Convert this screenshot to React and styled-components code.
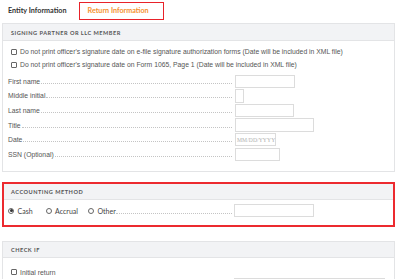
import React from "react";
import styled, { createGlobalStyle } from "styled-components";

const Global = createGlobalStyle`
  html, body { margin: 0; padding: 0; background: #fff; }
  body { font-family: "Liberation Sans", Arial, sans-serif; color: #555; }
  * { box-sizing: border-box; }
`;

const Page = styled.div`
  width: 399px;
  height: 279px;
  overflow: hidden;
  background: #fff;
`;

const Tabs = styled.div`
  display: flex;
  align-items: center;
  height: 23px;
  padding: 1px 0 3px 0;
`;

const Tab = styled.div`
  font-family: Lato, "Liberation Sans", sans-serif;
  font-weight: 700;
  font-size: 7.2px;
  height: 18px;
  display: flex;
  align-items: center;
  color: ${(p) => (p.$active ? "#f5922f" : "#333")};
  border: 1.5px solid ${(p) => (p.$active ? "#e8222a" : "transparent")};
  padding: 0 ${(p) => (p.$active ? "14px 0 8px" : "0 0 7px")};
  margin-left: ${(p) => (p.$active ? "11px" : "0")};
`;

const Content = styled.div`
  padding: 0 4px 0 2px;
  display: flex;
  flex-direction: column;
`;

const Panel = styled.section`
  border: ${(p) => (p.$highlight ? "2px solid #ec2a2f" : "1px solid #e3e4e6")};
  margin-top: ${(p) => p.$mt || 0}px;
  background: #fff;
`;

const PanelHeader = styled.div`
  height: ${(p) => p.$h || 17}px;
  background: #f2f3f5;
  border-bottom: 1px solid #e3e4e6;
  display: flex;
  align-items: center;
  padding-left: ${(p) => p.$pl || 8}px;
  font-family: Lato, "Liberation Sans", sans-serif;
  font-weight: 700;
  font-size: 5.6px;
  letter-spacing: 0.5px;
  color: #555;
  text-transform: uppercase;
`;

const PanelBody = styled.div`
  padding: ${(p) => p.$pad || "4px 0 9px 0"};
`;

const CheckRow = styled.label`
  display: flex;
  align-items: center;
  height: 13px;
  padding-left: ${(p) => p.$pl || 8}px;
  font-size: 6.8px;
  color: #555;
  gap: 3px;
`;

const Box = styled.span`
  width: 6px;
  height: 6px;
  border: 1px solid #666;
  border-radius: 1px;
  background: #fff;
  flex: none;
`;

const Fields = styled.div`
  display: grid;
  grid-template-columns: 232px auto;
  margin-top: 3px;
`;

const FieldLabel = styled.div`
  height: 14.6px;
  display: flex;
  align-items: center;
  padding-left: 5px;
  font-size: 6.8px;
  color: #555;
  white-space: nowrap;
  gap: 1px;
  &::after {
    content: "";
    flex: 1;
    border-bottom: 1px dotted #c4c4c4;
    margin-top: 4px;
    margin-right: 3px;
  }
`;

const InputCell = styled.div`
  height: 14.6px;
  display: flex;
  align-items: center;
`;

const Input = styled.div`
  width: ${(p) => p.$w}px;
  height: 13.5px;
  border: 1px solid #dcdcdc;
  background: #fff;
  display: flex;
  align-items: center;
  padding-left: 1px;
  font-family: "Liberation Serif", serif;
  font-size: 5.6px;
  color: #b0b0b0;
  letter-spacing: 0.1px;
  flex: none;
`;

const IndentRow = styled.div`
  display: flex;
  padding-left: 231px;
  margin-top: -1px;
`;

const RadioRow = styled.div`
  display: flex;
  align-items: center;
  height: 22px;
  padding: 0 0 0 4px;
  font-family: Lato, "Liberation Sans", sans-serif;
  font-size: 7px;
  color: #444;
`;

const RadioGroup = styled.div`
  display: flex;
  align-items: center;
  width: 226px;
`;

const RadioItem = styled.label`
  display: flex;
  align-items: center;
  gap: 3.5px;
  margin-right: ${(p) => p.$mr || 0}px;
  white-space: nowrap;
`;

const Circle = styled.span`
  width: 6px;
  height: 6px;
  border-radius: 50%;
  border: 0.8px solid #666;
  display: flex;
  align-items: center;
  justify-content: center;
  flex: none;
  &::after {
    content: "";
    width: 3px;
    height: 3px;
    border-radius: 50%;
    background: ${(p) => (p.$on ? "#333" : "transparent")};
  }
`;

const Leader = styled.span`
  flex: 1;
  border-bottom: 1px dotted #c4c4c4;
  margin-top: 5px;
  margin-right: 2px;
`;

const fields = [
  { label: "First name", w: 60 },
  { label: "Middle initial", w: 9 },
  { label: "Last name", w: 59 },
  { label: "Title", w: 79 },
  { label: "Date", w: 41, ph: "MM/DD/YYYY" },
  { label: "SSN (Optional)", w: 45 },
];

export default function App() {
  return (
    <Page>
      <Global />
      <Tabs>
        <Tab>Entity Information</Tab>
        <Tab $active>Return Information</Tab>
      </Tabs>
      <Content>
        <Panel>
          <PanelHeader>Signing partner or LLC member</PanelHeader>
          <PanelBody>
            <CheckRow>
              <Box />
              Do not print officer's signature date on e-file signature authorization forms (Date will be included in XML file)
            </CheckRow>
            <CheckRow>
              <Box />
              Do not print officer's signature date on Form 1065, Page 1 (Date will be included in XML file)
            </CheckRow>
            <Fields>
              {fields.map((f) => (
                <React.Fragment key={f.label}>
                  <FieldLabel>{f.label}</FieldLabel>
                  <InputCell>
                    <Input $w={f.w}>{f.ph}</Input>
                  </InputCell>
                </React.Fragment>
              ))}
            </Fields>
          </PanelBody>
        </Panel>
        <Panel $highlight $mt={10}>
          <PanelHeader $h={16} $pl={7}>Accounting method</PanelHeader>
          <PanelBody $pad="0 0 3px 0">
            <RadioRow>
              <RadioGroup>
                <RadioItem $mr={13}>
                  <Circle $on />
                  Cash
                </RadioItem>
                <RadioItem $mr={10}>
                  <Circle />
                  Accrual
                </RadioItem>
                <RadioItem>
                  <Circle />
                  Other
                </RadioItem>
                <Leader />
              </RadioGroup>
              <Input $w={80} />
            </RadioRow>
          </PanelBody>
        </Panel>
        <Panel $mt={14}>
          <PanelHeader $h={16}>Check if</PanelHeader>
          <PanelBody $pad="8px 0 0 0">
            <CheckRow>
              <Box />
              Initial return
            </CheckRow>
            <IndentRow>
              <Input $w={151} />
            </IndentRow>
          </PanelBody>
        </Panel>
      </Content>
    </Page>
  );
}
